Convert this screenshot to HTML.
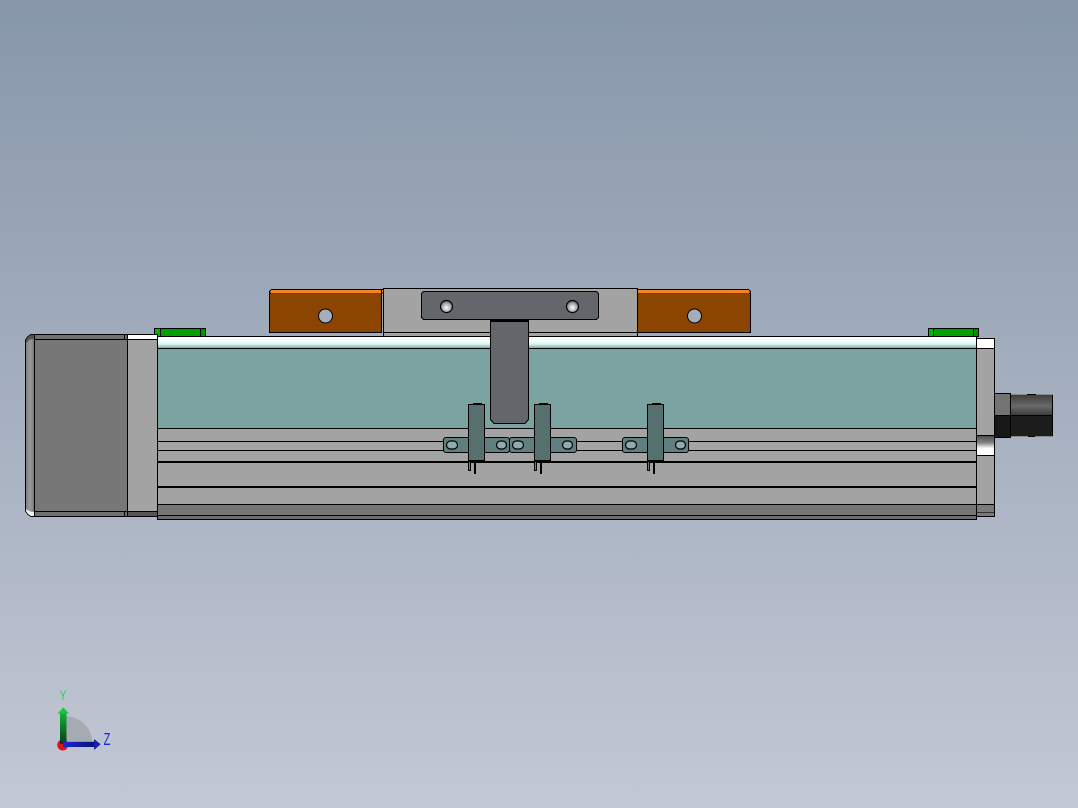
<!DOCTYPE html>
<html>
<head>
<meta charset="utf-8">
<style>
html,body{margin:0;padding:0;width:1078px;height:808px;overflow:hidden;background:#a5b0c0}
svg{display:block}
</style>
</head>
<body>
<svg width="1078" height="808" viewBox="0 0 1078 808" xmlns="http://www.w3.org/2000/svg">
<defs>
<linearGradient id="bg" x1="0" y1="0" x2="0" y2="1"><stop offset="0" stop-color="#8797aa"/><stop offset="1" stop-color="#c3c8d5"/></linearGradient>
<linearGradient id="wh" x1="0" y1="0" x2="0" y2="1"><stop offset="0" stop-color="#ffffff"/><stop offset=".4" stop-color="#f2fffe"/><stop offset=".65" stop-color="#d8f2f0"/><stop offset=".8" stop-color="#a8cdca"/><stop offset="1" stop-color="#7fa5a3"/></linearGradient>
<linearGradient id="band" x1="0" y1="0" x2="0" y2="1"><stop offset="0" stop-color="#4a4a4a"/><stop offset=".35" stop-color="#808080"/><stop offset=".65" stop-color="#ffffff"/><stop offset="1" stop-color="#ffffff"/></linearGradient>
<linearGradient id="cyl" x1="0" y1="0" x2="0" y2="1"><stop offset="0" stop-color="#3c3c3c"/><stop offset=".55" stop-color="#6a6a6a"/><stop offset="1" stop-color="#3a3a3a"/></linearGradient>
<linearGradient id="cap" x1="0" y1="0" x2="1" y2="0"><stop offset="0" stop-color="#7a7a7a"/><stop offset=".5" stop-color="#9a9a9a"/><stop offset="1" stop-color="#757575"/></linearGradient>
<radialGradient id="scr" cx=".5" cy=".6" r=".6"><stop offset="0" stop-color="#ffffff"/><stop offset=".55" stop-color="#b0b0b0"/><stop offset="1" stop-color="#555"/></radialGradient>
<linearGradient id="gy" x1="0" y1="0" x2="0" y2="1"><stop offset="0" stop-color="#14b83a"/><stop offset="1" stop-color="#063a14"/></linearGradient>
<linearGradient id="gz" x1="0" y1="0" x2="1" y2="0"><stop offset="0" stop-color="#1a28e0"/><stop offset="1" stop-color="#0a1470"/></linearGradient>
</defs>
<rect width="1078" height="808" fill="url(#bg)"/>

<g stroke="#000" stroke-width="1" shape-rendering="crispEdges">
<!-- green blocks -->
<rect x="154.5" y="328.5" width="51" height="8" fill="#00a000"/>
<rect x="154.5" y="328.5" width="6" height="8" fill="#00b800"/>
<rect x="200.5" y="328.5" width="5" height="8" fill="#009000"/>
<rect x="928.5" y="328.5" width="50" height="8" fill="#00a000"/>
<rect x="928.5" y="328.5" width="5" height="8" fill="#00b800"/>
<rect x="973.5" y="328.5" width="5" height="8" fill="#009000"/>

<!-- motor -->
<rect x="34.5" y="334.5" width="93" height="182" fill="#777777"/>
<rect x="34.5" y="334.5" width="90" height="5" fill="#707070"/>
<rect x="34.5" y="511.5" width="90" height="5" fill="#707070"/>
<rect x="124.5" y="334.5" width="3" height="5" fill="#707070"/>
<rect x="124.5" y="511.5" width="3" height="5" fill="#707070"/>
</g>
<path d="M34.5 334.5H31L28 336.5L25.5 340V511L28 514.5L31 516.5H34.5Z" fill="url(#cap)" stroke="#000"/>
<path d="M34 335H31L28 337L26 340L26 343L30 339.5L34 339Z" fill="#555"/>
<path d="M34 516H31L28 514L26 511L26 509L30 511.5L34 512Z" fill="#f2f2f2"/>

<g stroke="#000" stroke-width="1" shape-rendering="crispEdges">
<!-- coupling section -->
<rect x="127.5" y="339.5" width="30" height="172" fill="#a3a3a3"/>
<rect x="127.5" y="334.5" width="30" height="5" fill="#ffffff"/>
<rect x="127.5" y="511.5" width="30" height="5" fill="#555558"/>

<!-- right end cap -->
<rect x="976.5" y="338.5" width="18" height="178" fill="#a3a3a3"/>
<rect x="976.5" y="338.5" width="18" height="10" fill="#ffffff" stroke="#000"/>
<rect x="976.5" y="435.5" width="18" height="20" fill="url(#band)"/>
<rect x="976.5" y="504.5" width="18" height="12" fill="#7a7a7a"/>
<line x1="977" y1="512.5" x2="994" y2="512.5" stroke="#333"/>

<!-- connector -->
<rect x="1010.5" y="394.5" width="42" height="21" fill="url(#cyl)" stroke="none"/>
<rect x="1010.5" y="415.5" width="42" height="21" fill="#1c1c1c" stroke="none"/>
<line x1="1010" y1="415.5" x2="1053" y2="415.5"/>
<line x1="1052.5" y1="394" x2="1052.5" y2="437"/>
<line x1="1010" y1="394.5" x2="1053" y2="394.5" stroke="#888"/>
<line x1="1010" y1="436.5" x2="1053" y2="436.5" stroke="#888"/>
<line x1="1027" y1="394.5" x2="1036" y2="394.5"/>
<line x1="1028" y1="436.5" x2="1035" y2="436.5"/>
<rect x="994.5" y="393.5" width="16" height="22" fill="#737373"/>
<rect x="994.5" y="415.5" width="16" height="22" fill="#181818"/>

<!-- rail -->
<rect x="157.5" y="336.5" width="819" height="12" fill="url(#wh)"/>
<rect x="157.5" y="348.5" width="819" height="80" fill="#7ba3a1"/>
<rect x="157.5" y="428.5" width="819" height="76" fill="#a3a3a3"/>
<rect x="157.5" y="504.5" width="819" height="11" fill="#767676"/>
<rect x="157.5" y="515.5" width="819" height="4" fill="#6e6e6e"/>
<line x1="157" y1="441.5" x2="977" y2="441.5"/>
<line x1="157" y1="450.5" x2="977" y2="450.5"/>
<rect x="157" y="461" width="820" height="2" fill="#000" stroke="none"/>
<rect x="157" y="486" width="820" height="2" fill="#000" stroke="none"/>

<!-- carriage -->
<rect x="383.5" y="288.5" width="254" height="48" fill="#a3a3a3"/>
<line x1="383" y1="332.5" x2="638" y2="332.5"/>

<!-- orange blocks -->
<rect x="269.5" y="293.5" width="112" height="39" fill="#8c4500"/>
<rect x="637.5" y="293.5" width="113" height="39" fill="#8c4500"/>
</g>
<path d="M269.5 293V291.5L271.5 289.5H381.5V293Z" fill="#f5821f" stroke="#000" stroke-width="1"/>
<path d="M381.5 289.5H383.5V293H381.5Z" fill="#f5821f" stroke="#000"/>
<path d="M637.5 293V289.5H748.5L750.5 291.5V293Z" fill="#f5821f" stroke="#000"/>
<rect x="271" y="290" width="110" height="3.5" fill="#f5821f"/>
<rect x="638" y="290" width="111" height="3.5" fill="#f5821f"/>
<circle cx="325.5" cy="316" r="7" fill="#a3adbb" stroke="#000"/>
<circle cx="694.5" cy="316" r="7" fill="#a3adbb" stroke="#000"/>

<!-- T plate -->
<path d="M423.5 291.5H596.5L598.5 293.5V317.5L596.5 319.5H423.5L421.5 317.5V293.5Z" fill="#63666b" stroke="#000"/>
<circle cx="446.5" cy="306.5" r="6" fill="url(#scr)" stroke="#000" stroke-width="1.2"/>
<circle cx="572.5" cy="306.5" r="6" fill="url(#scr)" stroke="#000" stroke-width="1.2"/>
<path d="M490.5 321.5H528.5V419.5L525 423.5H494L490.5 419.5Z" fill="#63666b" stroke="#000"/>
<line x1="490" y1="320.5" x2="529" y2="320.5" stroke="#000"/>

<!-- sensor plates -->
<g fill="#5f807f" stroke="#000">
<rect x="443.5" y="437.5" width="66" height="15" rx="2.5"/>
<rect x="509.5" y="437.5" width="67" height="15" rx="2.5"/>
<rect x="622.5" y="437.5" width="66" height="15" rx="2.5"/>
</g>
<g fill="#92abaa" stroke="#000" stroke-width="1.2">
<rect x="446.5" y="441" width="11" height="8" rx="4"/>
<rect x="496.5" y="441" width="10" height="8" rx="4"/>
<rect x="512.5" y="441" width="11" height="8" rx="4"/>
<rect x="562.5" y="441" width="10" height="8" rx="4"/>
<rect x="625.5" y="441" width="11" height="8" rx="4"/>
<rect x="675.5" y="441" width="10" height="8" rx="4"/>
</g>

<!-- sensor bodies -->
<g stroke="#000" shape-rendering="crispEdges">
<rect x="468.5" y="404.5" width="16" height="56" fill="#56706f"/>
<rect x="534.5" y="404.5" width="16" height="56" fill="#56706f"/>
<rect x="647.5" y="404.5" width="16" height="56" fill="#56706f"/>
<rect x="468.5" y="461.5" width="2" height="9" fill="#6c7c7c"/>
<rect x="534.5" y="461.5" width="2" height="9" fill="#6c7c7c"/>
<rect x="647.5" y="461.5" width="2" height="9" fill="#6c7c7c"/>
</g>
<g fill="#000">
<rect x="474" y="461" width="2" height="13"/>
<rect x="540" y="461" width="2" height="13"/>
<rect x="653" y="461" width="2" height="13"/>
<rect x="473" y="403" width="9" height="1.5"/>
<rect x="539" y="403" width="9" height="1.5"/>
<rect x="652" y="403" width="9" height="1.5"/>
</g>

<!-- triad -->
<path d="M63 741V716A28 25 0 0 1 92 741Z" fill="#a6abb3"/>
<circle cx="62.7" cy="745" r="5.5" fill="#e0141c"/>
<rect x="60" y="712" width="6.5" height="32" fill="url(#gy)"/>
<path d="M63.3 707.5L69 713.5H57.5Z" fill="#14c83c"/>
<rect x="63" y="741.7" width="31" height="5.3" fill="url(#gz)"/>
<path d="M100.7 744.3L94 739V750Z" fill="#1420b0"/>
<text transform="translate(63 700) scale(.7 1)" font-family="'Liberation Sans',sans-serif" font-size="14" fill="#22d84a" text-anchor="middle">Y</text>
<text transform="translate(107 745) scale(.62 1)" font-family="'Liberation Sans',sans-serif" font-size="18" fill="#1a2ae8" text-anchor="middle">Z</text>
</svg>
</body>
</html>
